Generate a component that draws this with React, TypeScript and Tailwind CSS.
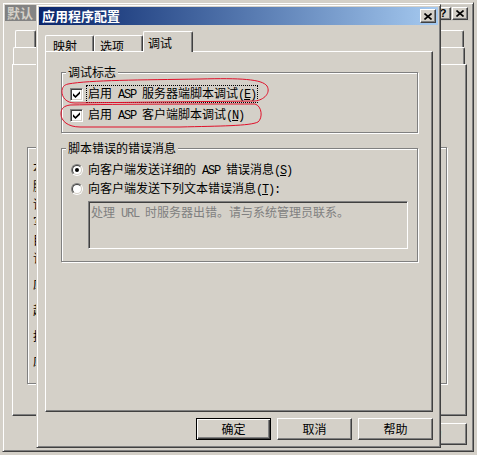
import React from 'react'

// half-width latin run, mimics the SimSun ASCII pitch (6px per char)
function A({ children }: { children: React.ReactNode }) {
  return (
    <span className="font-['Liberation_Mono',monospace] text-[12px] tracking-[-1.2px]">
      {children}
    </span>
  )
}

const raised =
  'border border-t-white border-l-white border-r-[#404040] border-b-[#404040] shadow-[inset_-1px_-1px_0_#808080]'
const sunken =
  'border border-t-[#808080] border-l-[#808080] border-r-white border-b-white shadow-[inset_1px_1px_0_#404040,inset_-1px_-1px_0_#d4d0c8]'
const frame =
  'border border-t-[#d4d0c8] border-l-[#d4d0c8] border-r-[#404040] border-b-[#404040] shadow-[inset_1px_1px_0_#ffffff,inset_-1px_-1px_0_#808080]'

function CloseGlyph() {
  return (
    <svg width="8" height="7" viewBox="0 0 8 7">
      <path d="M0.5 0.5L7.5 6.5M7.5 0.5L0.5 6.5" stroke="#000" strokeWidth="1.6" />
    </svg>
  )
}

function TitleButton({ children }: { children: React.ReactNode }) {
  return (
    <div className={`flex h-[14px] w-[16px] items-center justify-center bg-[#d4d0c8] ${raised}`}>
      {children}
    </div>
  )
}

function Button({ label, isDefault }: { label: string; isDefault?: boolean }) {
  const cls = isDefault
    ? 'border border-black shadow-[inset_1px_1px_0_#ffffff,inset_-1px_-1px_0_#404040,inset_-2px_-2px_0_#808080]'
    : raised
  return (
    <div className={`flex h-[22px] w-[75px] items-center justify-center bg-[#d4d0c8] ${cls}`}>
      {label}
    </div>
  )
}

function Checkbox({ checked }: { checked?: boolean }) {
  return (
    <span className={`flex h-[13px] w-[13px] shrink-0 items-center justify-center bg-white ${sunken}`}>
      {checked && (
        <svg width="7" height="7" viewBox="0 0 7 7">
          <polygon points="0,2.2 2.5,4.7 7,0.2 7,2.8 2.5,7 0,4.7" fill="#000" />
        </svg>
      )}
    </span>
  )
}

function Radio({ checked }: { checked?: boolean }) {
  return (
    <span className="flex h-[12px] w-[12px] shrink-0 rounded-full border border-t-[#808080] border-l-[#808080] border-r-white border-b-white">
      <span className="flex h-full w-full items-center justify-center rounded-full border border-t-[#404040] border-l-[#404040] border-r-[#d4d0c8] border-b-[#d4d0c8] bg-white">
        {checked && <span className="h-[4px] w-[4px] rounded-full bg-black" />}
      </span>
    </span>
  )
}

function GroupBox({
  title,
  className,
  children,
}: {
  title: string
  className: string
  children: React.ReactNode
}) {
  return (
    <div
      className={`relative border border-[#808080] shadow-[inset_1px_1px_0_#ffffff,1px_1px_0_#ffffff] ${className}`}
    >
      <span className="absolute -top-[8px] left-[4px] bg-[#d4d0c8] px-[2px]">{title}</span>
      {children}
    </div>
  )
}

function BackTab({ w }: { w: string }) {
  return (
    <div
      className={`h-full rounded-t-[2px] border-t border-l border-r border-t-white border-l-white border-r-[#404040] shadow-[inset_-1px_0_0_#808080] ${w}`}
    />
  )
}

function BackWindow() {
  return (
    <div className={`absolute left-[2px] top-[2px] flex h-[450px] w-[472px] flex-col bg-[#d4d0c8] p-[2px] ${frame}`}>
      <div className="flex h-[16px] items-center bg-gradient-to-r from-[#808080] to-[#ccc9c2] pl-[2px] pr-[3px]">
        <span className="text-[13px] font-bold text-[#d4d0c8]">默认</span>
        <div className="ml-auto flex gap-[1px]">
          <div className={`flex h-[13px] w-[16px] items-center justify-center bg-[#d4d0c8] ${raised}`}>
            <span className="font-['Liberation_Sans',sans-serif] text-[11px] font-bold leading-none">?</span>
          </div>
          <div className={`flex h-[13px] w-[16px] items-center justify-center bg-[#d4d0c8] ${raised}`}>
            <CloseGlyph />
          </div>
        </div>
      </div>

      {/* two rows of tabs */}
      <div className="ml-[10px] mt-[9px] flex h-[17px] w-[449px]">
        <BackTab w="w-[21px]" />
        <BackTab w="w-[90px]" />
        <BackTab w="w-[90px]" />
        <BackTab w="w-[90px]" />
        <BackTab w="w-[158px]" />
      </div>
      <div className="ml-[8px] flex h-[17px] w-[452px]">
        <BackTab w="w-[80px]" />
        <BackTab w="w-[90px]" />
        <BackTab w="w-[90px]" />
        <BackTab w="w-[90px]" />
        <BackTab w="w-[102px]" />
      </div>

      <div className={`ml-[7px] h-[352px] w-[455px] ${raised}`}>
        {/* only the first pixels of these labels peek out beside the dialog */}
        <div className="ml-[14px] mt-[82px] flex h-[237px] w-[420px] flex-col border border-[#808080] pl-[5px] pt-[12px] shadow-[inset_1px_1px_0_#ffffff,1px_1px_0_#ffffff]">
          <span>本</span>
          <span className="mt-[5px]">脚</span>
          <span className="mt-[4px]">读</span>
          <span className="mt-[4px]">写</span>
          <span className="mt-[4px]">目</span>
          <span className="mt-[4px]">记</span>
          <span className="mt-[12px]">应</span>
          <span className="mt-[12px]">起</span>
          <span className="mt-[12px]">执</span>
          <span className="mt-[11px]">应</span>
        </div>
      </div>

      <div className="ml-[7px] mt-[7px] flex w-[455px] justify-end gap-[6px]">
        <Button label="确定" />
        <Button label="取消" />
        <Button label="应用(A)" />
        <Button label="帮助" />
      </div>
    </div>
  )
}

function ConfigDialog() {
  return (
    <div className={`absolute left-[36px] top-[4px] flex h-[444px] w-[405px] flex-col bg-[#d4d0c8] p-[2px] ${frame}`}>
      {/* Title bar */}
      <div className="flex h-[18px] items-center bg-gradient-to-r from-[#0a246a] to-[#a6caf0] pl-[3px] pr-[2px]">
        <span className="text-[13px] font-bold text-white">应用程序配置</span>
        <div className="ml-auto">
          <TitleButton>
            <CloseGlyph />
          </TitleButton>
        </div>
      </div>

      {/* Tabs */}
      <div className="ml-[6px] mt-[6px] flex h-[20px] items-end">
        <div className="h-[16px] w-[49px] rounded-t-[2px] border-t border-l border-r border-t-white border-l-white border-r-[#404040] pl-[7px] pt-[3px] shadow-[inset_-1px_0_0_#808080]">
          映射
        </div>
        <div className="h-[16px] w-[49px] rounded-t-[2px] border-t border-l border-r border-t-white border-l-white border-r-[#404040] pl-[5px] pt-[3px] shadow-[inset_-1px_0_0_#808080]">
          选项
        </div>
        <div className="relative z-10 -mb-px h-[21px] w-[50px] rounded-t-[2px] border-t border-l border-r border-t-white border-l-white border-r-[#404040] bg-[#d4d0c8] pl-[4px] pt-[4px] shadow-[inset_-1px_0_0_#808080]">
          调试
        </div>
      </div>

      {/* Tab page */}
      <div className={`ml-[6px] h-[361px] w-[388px] px-[15px] pt-[20px] ${raised}`}>
        <GroupBox title="调试标志" className="h-[61px] w-[357px]">
          <div className="flex flex-col gap-[5px] pl-[8px] pt-[13px]">
            <div className="flex h-[16px] items-center">
              <Checkbox checked />
              <span className="ml-[3px] border border-dotted border-black px-[1px]">
                启用<A> ASP </A>服务器端脚本调试<A>(<u>E</u>)</A>
              </span>
            </div>
            <div className="flex h-[16px] items-center">
              <Checkbox checked />
              <span className="ml-[3px] border border-transparent px-[1px]">
                启用<A> ASP </A>客户端脚本调试<A>(<u>N</u>)</A>
              </span>
            </div>
          </div>
        </GroupBox>

        <GroupBox title="脚本错误的错误消息" className="mt-[15px] h-[114px] w-[357px]">
          <div className="flex flex-col pl-[9px] pt-[13px]">
            <div className="flex h-[16px] items-center">
              <Radio checked />
              <span className="ml-[3px] border border-transparent px-[1px]">
                向客户端发送详细的<A> ASP </A>错误消息<A>(<u>S</u>)</A>
              </span>
            </div>
            <div className="mt-[3px] flex h-[16px] items-center">
              <Radio />
              <span className="ml-[3px] border border-transparent px-[1px]">
                向客户端发送下列文本错误消息<A>(<u>T</u>):</A>
              </span>
            </div>
            <div className={`ml-[17px] mt-[4px] h-[48px] w-[320px] bg-[#d4d0c8] px-[2px] pt-[3px] text-[#808080] ${sunken}`}>
              处理<A> URL </A>时服务器出错。请与系统管理员联系。
            </div>
          </div>
        </GroupBox>
      </div>

      {/* Buttons */}
      <div className="ml-[6px] mt-[6px] flex w-[388px] justify-end gap-[6px]">
        <Button label="确定" isDefault />
        <Button label="取消" />
        <Button label="帮助" />
      </div>
    </div>
  )
}

// hand-drawn red rings round the two checkboxes
function Marks() {
  return (
    <svg className="pointer-events-none absolute left-0 top-0" width="477" height="455" viewBox="0 0 477 455">
      <path
        d="M68 84 C90 80 140 80 200 79 C240 78 262 79 267 86 C271 93 264 100 255 101 L160 102 L75 103 C66 103 62 97 62 92 C62 87 64 85 68 84"
        fill="none"
        stroke="#e0102a"
        strokeWidth="1"
      />
      <path
        d="M70 105 C120 104 200 104 255 104 C262 106 263 118 258 122 C250 126 220 126 180 127 L80 127 C68 127 61 121 61 114 C61 108 64 106 70 105"
        fill="none"
        stroke="#e0102a"
        strokeWidth="1"
      />
    </svg>
  )
}

export default function App() {
  return (
    <div className="relative h-[455px] w-[477px] overflow-hidden bg-[#d4d0c8] font-['Noto_Sans_CJK_SC',sans-serif] text-[12px] leading-[14px] text-black">
      <BackWindow />
      <ConfigDialog />
      <Marks />
    </div>
  )
}
